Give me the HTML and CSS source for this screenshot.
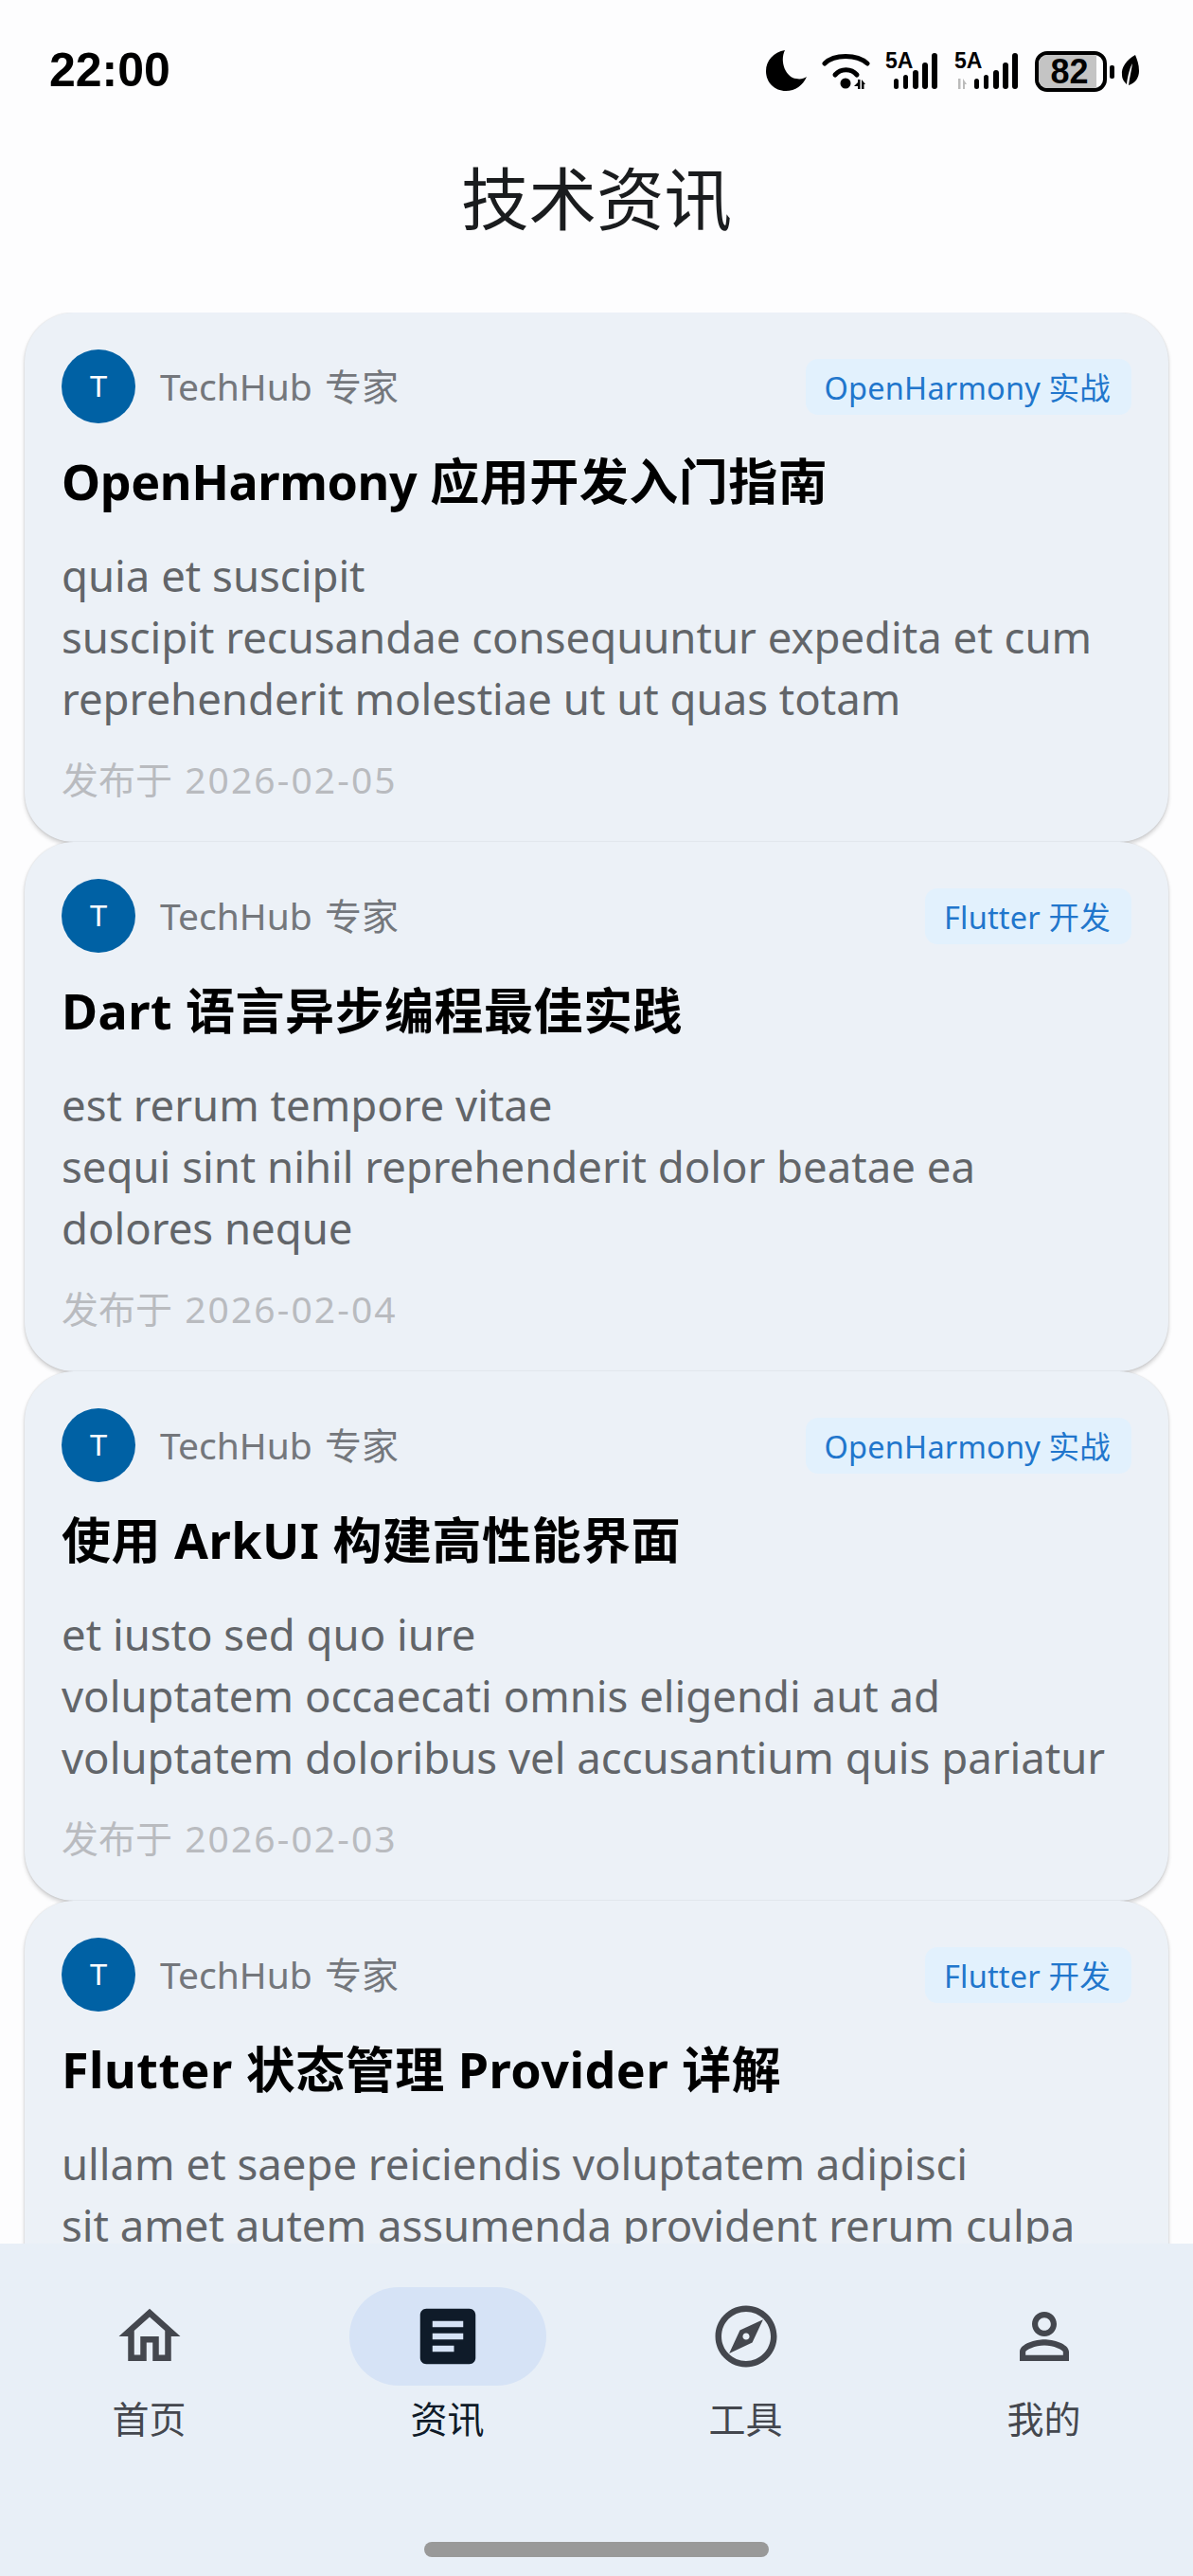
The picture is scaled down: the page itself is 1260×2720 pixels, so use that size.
FILE: index.html
```html
<!DOCTYPE html>
<html lang="zh">
<head>
<meta charset="utf-8">
<title>技术资讯</title>
<link rel="stylesheet" href="styles.css">
</head>
<body>
<div class="app">
  <header class="status">
    <span class="time">22:00</span>
    <div class="status-icons">
      <svg class="i-moon" width="43" height="43" viewBox="0 0 43 43"><path d="M20 0C8 2 0 11 0 22c0 12 9 21 21 21 10 0 18-6 22-15-3 2-7 3-11 2C21 29 14 12 20 0z" fill="#000"/></svg>
      <svg class="i-wifi" width="52" height="38" viewBox="0 0 52 38"><g fill="none" stroke="#000" stroke-width="5" stroke-linecap="round"><path d="M3 10C13 0 37 0 48 10"/><path d="M14 22C20 15 31 15 37 22"/></g><circle cx="25" cy="31" r="5.500" fill="#000"/><path d="M38 30l-4 4h4zM38 27h2.500v10h-2.500zM42 27l4 5h-4zM42 32h2.500v5h-2.500z" fill="#000"/></svg>
      <svg class="i-sig" width="56" height="44" viewBox="0 0 56 44"><text x="0" y="21" class="sig-t">5A</text><g fill="#000"><rect x="9" y="32" width="5" height="11" rx="2.500"/><rect x="19" y="28" width="5" height="15" rx="2.500"/><rect x="29" y="23" width="6" height="20" rx="3"/><rect x="39" y="15" width="6" height="28" rx="3"/><rect x="49" y="5" width="6" height="38" rx="3"/></g></svg>
      <svg class="i-sig" width="68" height="44" viewBox="0 0 68 44"><text x="0" y="21" class="sig-t">5A</text><path d="M4 32h2.500v11h-2.500zM9 32l4 6h-4zM9 38h2v5h-2z" fill="#bbb"/><g fill="#000"><rect x="21" y="32" width="5" height="11" rx="2.500"/><rect x="31" y="28" width="5" height="15" rx="2.500"/><rect x="41" y="23" width="6" height="20" rx="3"/><rect x="51" y="15" width="6" height="28" rx="3"/><rect x="61" y="5" width="6" height="38" rx="3"/></g></svg>
      <div class="battery"><div class="batt-fill"></div><span class="batt-num">82</span></div>
      <span class="batt-nub"></span>
      <svg class="i-leaf" width="20" height="32" viewBox="0 0 20 32"><path d="M15 0C6 5 0 13 1 21c0 5 3 8 5 10C7 21 10 12 12 9c-1 7-3 15-4 23 7-2 11-8 11-15 0-7-2-12-4-17z" fill="#000"/></svg>
    </div>
  </header>
  <h1 class="page-title">技术资讯</h1>
  <main class="list">
    <article class="card">
      <div class="card-head">
        <span class="avatar">T</span>
        <span class="author">TechHub 专家</span>
        <span class="tag">OpenHarmony 实战</span>
      </div>
      <h2 class="card-title"><span class="tight">OpenHarmony</span> 应用开发入门指南</h2>
      <p class="card-body">quia et suscipit<br>suscipit recusandae consequuntur expedita et cum<br>reprehenderit molestiae ut ut quas totam</p>
      <div class="card-date">发布于 <span class="date-num">2026-02-05</span></div>
    </article>
    <article class="card">
      <div class="card-head">
        <span class="avatar">T</span>
        <span class="author">TechHub 专家</span>
        <span class="tag">Flutter 开发</span>
      </div>
      <h2 class="card-title">Dart 语言异步编程最佳实践</h2>
      <p class="card-body">est rerum tempore vitae<br>sequi sint nihil reprehenderit dolor beatae ea<br>dolores neque</p>
      <div class="card-date">发布于 <span class="date-num">2026-02-04</span></div>
    </article>
    <article class="card">
      <div class="card-head">
        <span class="avatar">T</span>
        <span class="author">TechHub 专家</span>
        <span class="tag">OpenHarmony 实战</span>
      </div>
      <h2 class="card-title">使用 ArkUI 构建高性能界面</h2>
      <p class="card-body">et iusto sed quo iure<br>voluptatem occaecati omnis eligendi aut ad<br>voluptatem doloribus vel accusantium quis pariatur</p>
      <div class="card-date">发布于 <span class="date-num">2026-02-03</span></div>
    </article>
    <article class="card">
      <div class="card-head">
        <span class="avatar">T</span>
        <span class="author">TechHub 专家</span>
        <span class="tag">Flutter 开发</span>
      </div>
      <h2 class="card-title">Flutter 状态管理 Provider 详解</h2>
      <p class="card-body">ullam et saepe reiciendis voluptatem adipisci<br>sit amet autem assumenda provident rerum culpa</p>
    </article>
  </main>
  <nav class="nav">
    <div class="nav-items">
      <div class="nav-item">
        <span class="nav-pill"><svg width="78" height="78" viewBox="0 0 24 24"><path fill="#44474e" d="M12 5.690l5 4.500V18h-2v-6H9v6H7v-7.810l5-4.500M12 3L2 12h3v8h6v-6h2v6h6v-8h3L12 3z"/></svg></span>
        <span class="nav-label">首页</span>
      </div>
      <div class="nav-item active">
        <span class="nav-pill"><svg width="78" height="78" viewBox="0 0 24 24"><path fill="#0f1b29" d="M19 3H5c-1.100 0-2 .9-2 2v14c0 1.100.9 2 2 2h14c1.100 0 2-.9 2-2V5c0-1.100-.9-2-2-2zm-5 14H7v-2h7v2zm3-4H7v-2h10v2zm0-4H7V7h10v2z"/></svg></span>
        <span class="nav-label">资讯</span>
      </div>
      <div class="nav-item">
        <span class="nav-pill"><svg width="78" height="78" viewBox="0 0 24 24"><path fill="#44474e" d="M12 2C6.480 2 2 6.480 2 12s4.480 10 10 10 10-4.480 10-10S17.520 2 12 2zm0 18c-4.410 0-8-3.590-8-8s3.590-8 8-8 8 3.590 8 8-3.590 8-8 8zm-5.500-2.500l7.510-3.490L17.500 6.500 9.990 9.990 6.500 17.500zm5.500-6.600c.61 0 1.100.49 1.100 1.100s-.49 1.100-1.100 1.100-1.100-.49-1.100-1.100.49-1.100 1.100-1.100z"/></svg></span>
        <span class="nav-label">工具</span>
      </div>
      <div class="nav-item">
        <span class="nav-pill"><svg width="78" height="78" viewBox="0 0 24 24"><path fill="#44474e" d="M12 5.900c1.160 0 2.100.94 2.100 2.100s-.94 2.100-2.100 2.100S9.900 9.160 9.900 8s.94-2.100 2.100-2.100m0 9c2.970 0 6.100 1.460 6.100 2.100v1.100H5.900V17c0-.64 3.130-2.100 6.100-2.100M12 4C9.790 4 8 5.790 8 8s1.790 4 4 4 4-1.790 4-4-1.790-4-4-4zm0 9c-2.670 0-8 1.340-8 4v3h16v-3c0-2.660-5.330-4-8-4z"/></svg></span>
        <span class="nav-label">我的</span>
      </div>
    </div>
    <div class="home-bar"></div>
  </nav>
</div>
</body>
</html>
```
FILE: styles.css
```css
* { box-sizing: border-box; margin: 0; padding: 0; }
html, body { width: 1260px; height: 2720px; overflow: hidden; background: #fdfdfe; }
body { font-family: "Noto Sans", "Noto Sans CJK SC", sans-serif; }
.app { width: 1260px; height: 2720px; display: flex; flex-direction: column; }

.status { height: 140px; padding: 50px 56px 0 52px; display: flex; justify-content: space-between; align-items: flex-start; flex: none; }
.time { font: 700 50px/48px "Liberation Sans", sans-serif; color: #000; }
.status-icons { display: flex; align-items: flex-start; padding-top: 3px; }
.i-moon { margin-right: 16px; }
.i-wifi { margin: 4px 15px 0 0; }
.i-sig { margin: -2px 0 0 0; }
.i-sig + .i-sig { margin-left: 17px; }
.sig-t { font: 700 23px "Liberation Sans", sans-serif; fill: #000; }
.battery { position: relative; width: 76px; height: 43px; margin: 1px 0 0 17px; border: 4px solid #000; border-radius: 13px; overflow: hidden; display: flex; align-items: center; justify-content: center; }
.batt-fill { position: absolute; inset: 0 7px 0 0; background: #c4c4c4; }
.batt-num { position: relative; font: 700 36px/36px "Liberation Sans", sans-serif; color: #000; margin-right: 3px; }
.batt-nub { width: 5px; height: 14px; margin: 16px 7px 0 3px; background: #000; border-radius: 2px; }
.i-leaf { margin-top: 5px; }

.page-title { flex: none; height: 190px; padding-top: 31px; text-align: center; font: 400 71.500px/70px "Noto Sans CJK SC", sans-serif; color: #1a1c1e; }

.list { flex: 1 1 0; min-height: 0; overflow: hidden; padding: 0 26px; display: flex; flex-direction: column; }
.card { flex: none; height: 559px; padding: 39px; background: #ecf1f7; border-radius: 52px; box-shadow: 0 3px 4px rgba(0,0,0,.18), 0 0 2px rgba(0,0,0,.12); }
.card-head { display: flex; align-items: center; height: 78px; }
.avatar { width: 78px; height: 78px; border-radius: 50%; background: #0061a4; color: #fff; font: 400 32px/78px "Roboto", sans-serif; text-align: center; flex: none; }
.author { margin-left: 26px; flex: 1; font-size: 39px; line-height: 52px; color: #74777c; word-spacing: 3px; }
.tag { padding: 2px 22px 0 20px; height: 59px; border-radius: 13px; background: #e2f1fd; color: #2176cc; font-size: 32.500px; line-height: 57px; letter-spacing: .2px; }
.card-title { margin-top: 26px; font-size: 52px; line-height: 70px; font-weight: 700; color: #000; letter-spacing: .5px; }
.tight { letter-spacing: -.4px; }
.card-body { margin-top: 32px; font-size: 45.500px; line-height: 65px; color: #626569; }
.card-date { margin-top: 27px; font-size: 39px; line-height: 52px; color: #b9bbbf; word-spacing: 3px; }
.date-num { letter-spacing: 2.100px; }

.nav { flex: none; height: 351px; background: #e8eff7; display: flex; flex-direction: column; align-items: center; position: relative; }
.nav-items { width: 100%; display: flex; padding-top: 46px; }
.nav-item { flex: 1; display: flex; flex-direction: column; align-items: center; }
.nav-pill { width: 208px; height: 104px; border-radius: 52px; display: flex; align-items: center; justify-content: center; }
.active .nav-pill { background: #d6e3f6; }
.nav-label { margin-top: 9px; font-size: 39px; line-height: 52px; color: #44474e; }
.active .nav-label { color: #0f1b29; }
.home-bar { margin-top: 104px; width: 364px; height: 16px; border-radius: 8px; background: #999; }
```
